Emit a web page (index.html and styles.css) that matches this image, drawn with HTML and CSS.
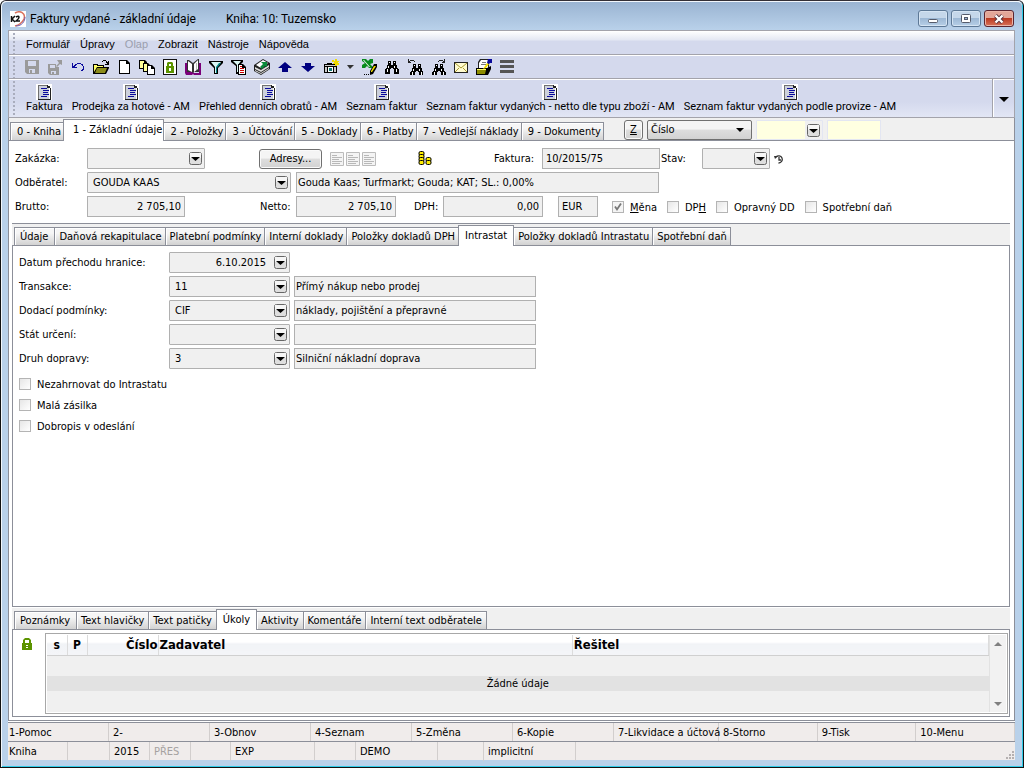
FILE: index.html
```
<!DOCTYPE html>
<html lang="cs">
<head>
<meta charset="utf-8">
<title>Faktury vydané - základní údaje</title>
<link rel="stylesheet" href="styles.css">
</head>
<body>
<svg class="defs" aria-hidden="true">
  <symbol id="drop" viewBox="0 0 15 15">
    <rect x="1.500" y="1.500" width="12" height="12" rx="2" fill="#dedede" stroke="#666"/>
    <rect x="2" y="2" width="11" height="5" fill="#f6f6f6"/>
    <path d="M3 6h9L7.500 10z" fill="#000"/>
  </symbol>
  <symbol id="report" viewBox="0 0 16 16">
    <path fill="#fff" d="M0 0h16v16H0z"/>
    <path fill="#cdd1dc" d="M3 2h10v13H3z"/>
    <path fill="#707070" d="M2 1h9v1H3v13H2z"/>
    <path fill="#222" d="M11 1h1v1h2v2h1v12H2v-1h12V4h-3z"/>
    <path fill="#0a0a9c" d="M5 4h6v1H5zM7 6h6v1H7zM7 8h5v1H7zM7 10h6v1H7zM5 12h6v1H5z"/>
  </symbol>
  <symbol id="page" viewBox="0 0 14 14">
    <path fill="#f4f4f4" stroke="#bcbcbc" d="M.5.5h13v13H.5z"/>
    <path fill="#b8b8b8" d="M2 3h5v1H2zM2 5h10v1H2zM2 7h7v1H2zM2 9h10v1H2zM2 11h8v1H2z"/>
  </symbol>
  <symbol id="bino" viewBox="0 0 16 16">
    <path fill="#000" d="M4 2h3v4h2V2h3v4h1v3h1v1h1v5h-5v-5H9V9H7v1H6v5H1v-5h1V9h1V6h1z"/>
    <path fill="#fff" d="M5 3h1v1H5zM10 3h1v1h-1zM4 7h1v2H4zM3 10h1v3H3zM10 7h1v2h-1zM12 10h1v3h-1z"/>
  </symbol>
</svg>

<div class="window">
  <header class="titlebar">
    <svg class="logo" viewBox="0 0 16 16"><path fill="#fff" d="M0 0h16v16H0z"/><path d="M5 2C10-1 16 2 14 8 12 12 9 14 5 15" fill="none" stroke="#d9705c" stroke-width="1.500"/><path d="M6 15c6 0 9-5 9-9" fill="none" stroke="#6a5cae"/><path d="M1.500 5v6M5 5 2 8l3 3M6 6c4-2 4 1 0 4h4" fill="none" stroke="#111" stroke-width="1.500"/></svg>
    <h1 class="title">Faktury vydané - základní údaje</h1>
    <span class="subtitle">Kniha: 10: Tuzemsko</span>
    <div class="winbtns">
      <button class="winbtn" aria-label="Minimalizovat"><svg viewBox="0 0 14 12"><rect x="2.500" y="6.500" width="9" height="3" rx="1" fill="#fff" stroke="#555b6b"/></svg></button>
      <button class="winbtn" aria-label="Maximalizovat"><svg viewBox="0 0 14 12"><rect x="2.500" y="1.500" width="9" height="8" rx="1" fill="#fff" stroke="#555b6b"/><rect x="5.500" y="4.500" width="3" height="2" fill="#9bb5d6" stroke="#555b6b"/></svg></button>
      <button class="winbtn close" aria-label="Zavřít"><svg viewBox="0 0 14 12"><path d="m3.500 2.500 7 7m0-7-7 7" stroke="#54303a" stroke-width="4"/><path d="m3.500 2.500 7 7m0-7-7 7" stroke="#fff" stroke-width="2.400"/></svg></button>
    </div>
  </header>

  <main class="client">
    <nav class="menu bar">
      <button>Formulář</button><button>Úpravy</button><button disabled>Olap</button><button>Zobrazit</button><button>Nástroje</button><button>Nápověda</button>
    </nav>

    <div class="tools bar" role="toolbar" aria-label="Nástroje">
      <button aria-label="Uložit"><svg viewBox="0 0 16 16"><path fill="#9a9a9a" d="M1 1h14v14H3l-2-2z"/><path fill="#d4d9ed" d="M4 2h8v5H4zM5 10h6v4H5z"/><path fill="#9a9a9a" d="M6 11h2v3H6z"/></svg></button>
      <button aria-label="Uložit a zavřít"><svg viewBox="0 0 16 16"><path fill="#9a9a9a" d="M1 5h8v3h3v8H3l-2-2z"/><path fill="#d4d9ed" d="M3 6h5v3H3zM4 12h5v3H4z"/><path fill="#9a9a9a" d="M5 13h2v2H5zM10 1h5v5l-2-1-3 3-1-1 3-3z"/></svg></button>
      <button aria-label="Zpět"><svg viewBox="0 0 16 16"><path fill="#0a0a9c" d="M2 4h1v3h1V6h1V5h2V4h4v1h2v2h1v4h-1v1h-2v-1h1v-1h1V7h-1V6h-1V5H7v1H6v1H5v1h2v1H2z"/></svg></button>
      <button aria-label="Otevřít"><svg viewBox="0 0 16 16"><path fill="#000" d="M9 2h1V1h3v1h1v1h1V2h1v4h-4V5h2V4h-1V2h-3v1H9zM0 5h5v1h6v2h5v1l-3 6H0z"/><path fill="#ffff66" d="M1 6h3v1h6v1H4l-3 5z"/><path fill="#8c8c1a" d="M4 9h10l-2 5H2z"/></svg></button>
      <button aria-label="Nový"><svg viewBox="0 0 16 16"><path fill="#000" d="M3 1h8l3 3v11H3z"/><path fill="#fff" d="M4 2h6v3h3v9H4z"/></svg></button>
      <button aria-label="Kopírovat"><svg viewBox="0 0 16 16"><path fill="#000" d="M0 1h6l2 2v7H0z"/><path fill="#ffff99" d="M1 2h4v2h2v5H1z"/><path fill="#000" d="M4 4h5l2 2v7H4z"/><path fill="#ffff99" d="M5 5h3v2h2v5H5z"/><path fill="#000" d="M8 6h5l3 3v7H8z"/><path fill="#fff" d="M9 7h3v3h3v5H9z"/></svg></button>
      <button aria-label="Zámek"><svg viewBox="0 0 16 16"><path fill="#111" d="M1 0h14v16H1z"/><path fill="#fff" d="M2 1h12v14H2z"/><path fill="#5c9400" d="M5 7V4l1-1h4l1 1v3h1v7H4V7zm2 0h2V5H7z"/><path fill="#fff" d="M7 9h2v3H7z"/></svg></button>
      <button aria-label="Kniha"><svg viewBox="0 0 16 16"><path fill="#7a007a" d="M0 4h2v9h6l1 1h5V4h2v12H9l-1-1-1 1H1l-1-2z"/><path fill="#333" d="M2 1h2l4 3 5-4h1v13H9l-1 1-1-1H2z"/><path fill="#fff" d="M3 2l4 3v8l-4-2zM9 5l4-4v9l-4 3z"/><path fill="#bbb" d="M11 4h1v7h-1z"/></svg></button>
      <button aria-label="Filtr"><svg viewBox="0 0 16 16"><path fill="#000" d="M1 2h14v2L10 9v6H6V9L1 4z"/><path fill="#d9f6f4" d="M3 3h10L9 8v6H7V8z"/><path fill="#008080" d="M11 4h2L9 9v5H8V8z"/></svg></button>
      <button aria-label="Filtr dokladu"><svg viewBox="0 0 16 16"><path fill="#000" d="M0 1h12v2L8 7v8H5V7L0 3z"/><path fill="#d9f6f4" d="M2 2h8L7 6v7H6V6z"/><path fill="#000" d="M7 5h5l3 3v8H7z"/><path fill="#fff" d="M8 6h3v3h3v6H8z"/><path fill="#c00" d="M9 7h2v1H9zM9 9h4v1H9zM9 11h4v1H9zM9 13h4v1H9z"/></svg></button>
      <button aria-label="Tisk"><svg viewBox="0 0 16 16"><path fill="#222" d="M9 0l7 4v6l-9 6-7-4V6z"/><path fill="#fff" d="M9 1l5 3-7 5-5-3z"/><path fill="#ddd" d="M1 8l6 3 8-5v2l-8 5-6-3zM1 11l6 3 8-5v1l-8 5-6-3z"/><path fill="#0a8a3a" d="M7 3h6v5l-2-1-3 3-2-2 3-3z"/></svg></button>
      <button aria-label="Nahoru"><svg viewBox="0 0 16 16"><path fill="#000080" d="M8 3l7 6h-4v4H5V9H1z"/></svg></button>
      <button aria-label="Dolů"><svg viewBox="0 0 16 16"><path fill="#000080" d="M8 13l7-6h-4V4H5v3H1z"/></svg></button>
      <button aria-label="Snímek"><svg viewBox="0 0 16 16"><path fill="#000" d="M1 5h3V4h5v1h5v9H1z"/><path fill="#ccc" d="M2 6h11v1H2zM2 8h2v5H2zM11 8h2v5h-2z"/><path fill="#fff" d="M5 8h5v5H5z"/><path fill="#177" d="M6 9h3v3H6z"/><path fill="#f0dc00" d="M9 1h2v1h1V0h2v2h2v1h-1v1h1v2h-2v1h-2V5h-2V4h1V3H9z"/></svg></button>
      <button class="narrow" aria-label="Další možnosti snímku"><svg viewBox="0 0 8 16"><path fill="#333" d="M1 6h7L4 10z"/></svg></button>
      <button aria-label="Excel"><svg viewBox="0 0 16 16"><path fill="#078a1c" d="M1 0h4l2 2 2-2h3v4L9 5l3 3v1H8L6 7 4 9H1V6l3-2-3-2z"/><path fill="#fff" d="M2 1h1l6 7H8z"/><path fill="#000" d="M13 5h3v3l-4 7-3 1v-4z"/><path fill="#f4e000" d="M13 7h2l-4 6h-1v-1z"/><path fill="#000" d="M3 15h1v1H3zM5 15h1v1H5zM7 15h1v1H7z"/></svg></button>
      <button aria-label="Hledat"><svg viewBox="0 0 16 16"><use href="#bino"/></svg></button>
      <button aria-label="Hledat předchozí"><svg viewBox="0 0 16 16"><path fill="#222" d="M1 0h1v2h1V1h4v1h1v1H7V2H3v1h1v1H1z"/><svg x="2" y="3" width="13" height="13"><use href="#bino"/></svg></svg></button>
      <button aria-label="Hledat další"><svg viewBox="0 0 16 16"><path fill="#222" d="M15 0h-1v2h-1V1H9v1H8v1h1V2h4v1h-1v1h3z"/><svg x="1" y="3" width="13" height="13"><use href="#bino"/></svg></svg></button>
      <button aria-label="Pošta"><svg viewBox="0 0 16 16"><path fill="#222" d="M1 3h14v11H1z"/><path fill="#fffbd0" d="M2 4h12v9H2z"/><path d="M2 4l6 5 6-5M2 13l4-4m8 4-4-4" fill="none" stroke="#a89a30"/></svg></button>
      <button aria-label="Úkol"><svg viewBox="0 0 16 16"><path fill="#222" d="M4 0h9v11H2V3z"/><path fill="#fff" d="M5 1h7v8H3V4z"/><path fill="#777" d="M6 3h4v1H6zM5 5h5v1H5z"/><path fill="#000" d="M0 9h11l4-2v3l-3 6H0z"/><path fill="#8c8c00" d="M1 11h9l-1 4H1z"/><path fill="#ffff66" d="M1 10h9v1H1z"/><path fill="#f4e000" d="M11 4l2 1-3 4-3 1z"/><path fill="#0a0a9c" d="M12 0h4v4h-2l-1 1-2-1z"/></svg></button>
      <button aria-label="Nabídka"><svg viewBox="0 0 16 16"><path fill="#555" d="M1 1h14v3H1zM1 6h14v3H1zM1 11h14v3H1z"/></svg></button>
    </div>

    <div class="reports bar">
      <button><svg><use href="#report"/></svg>Faktura</button>
      <button><svg><use href="#report"/></svg>Prodejka za hotové - AM</button>
      <button><svg><use href="#report"/></svg>Přehled denních obratů - AM</button>
      <button><svg><use href="#report"/></svg>Seznam faktur</button>
      <button><svg><use href="#report"/></svg>Seznam faktur vydaných - netto dle typu zboží - AM</button>
      <button><svg><use href="#report"/></svg>Seznam faktur vydaných podle provize - AM</button>
      <button class="more" aria-label="Další sestavy"><svg viewBox="0 0 10 6"><path d="M0 0h10L5 5z"/></svg></button>
    </div>

    <div class="tabs maintabs">
      <div class="tablist" role="tablist">
        <button role="tab">0 - Kniha</button><button role="tab" aria-selected="true">1 - Základní údaje</button><button role="tab">2 - Položky</button><button role="tab">3 - Účtování</button><button role="tab">5 - Doklady</button><button role="tab">6 - Platby</button><button role="tab">7 - Vedlejší náklady</button><button role="tab">9 - Dokumenty</button>
      </div>
      <div class="search">
        <button class="push zbtn"><u>Z</u></button>
        <div class="pick">
          <select aria-label="Hledat podle"><option>Číslo</option></select>
          <svg viewBox="0 0 8 4"><path d="M0 0h8L4 4z"/></svg>
        </div>
        <div class="combo yellow"><input aria-label="Hledaná hodnota"><svg><use href="#drop"/></svg></div>
        <input class="yellow until" aria-label="Do hodnoty">
      </div>
    </div>

    <section class="panel">
      <form class="head">
        <div class="row">
          <label class="lead" for="zak">Zakázka:</label>
          <div class="combo w118"><select id="zak"><option></option></select><svg><use href="#drop"/></svg></div>
          <button type="button" class="push addr">Adresy...</button>
          <span class="pages"><svg><use href="#page"/></svg><svg><use href="#page"/></svg><svg><use href="#page"/></svg></span>
          <svg class="coins" viewBox="0 0 14 15"><g fill="#ffee00" stroke="#000"><rect x="1" y=".5" width="5" height="4" rx="1.500"/><rect x="1" y="3.500" width="5" height="4" rx="1.500"/><rect x="1" y="6.500" width="5" height="4" rx="1.500"/><rect x="1" y="9.500" width="5" height="4" rx="1.500"/><rect x="8" y="6.500" width="5" height="4" rx="1.500"/><rect x="8" y="9.500" width="5" height="4" rx="1.500"/></g></svg>
          <label class="lfak" for="fak">Faktura:</label>
          <input id="fak" class="w118" value="10/2015/75" readonly>
          <label class="lstav" for="stav">Stav:</label>
          <div class="combo w68"><select id="stav"><option></option></select><svg><use href="#drop"/></svg></div>
          <svg class="clock" viewBox="0 0 10 10"><path d="M2 3a3.600 3.600 0 1 1 2.500 6M5 3v3h2" fill="none" stroke="#333" stroke-width="1.300"/><path d="M0 2h4L1 5z" fill="#333"/></svg>
        </div>
        <div class="row">
          <label class="lead" for="odb">Odběratel:</label>
          <div class="combo w204"><select id="odb"><option>GOUDA KAAS</option></select><svg><use href="#drop"/></svg></div>
          <input class="info w363" aria-label="Adresa odběratele" value="Gouda Kaas; Turfmarkt; Gouda; KAT; SL.: 0,00%" readonly>
        </div>
        <div class="row">
          <label class="lead" for="bru">Brutto:</label>
          <input id="bru" class="num w98" value="2 705,10" readonly>
          <label class="lnet" for="net">Netto:</label>
          <input id="net" class="num w100" value="2 705,10" readonly>
          <label class="ldph" for="dph">DPH:</label>
          <input id="dph" class="num w100" value="0,00" readonly>
          <input class="cur" aria-label="Měna dokladu" value="EUR" readonly>
          <div class="checks">
            <label><input type="checkbox" checked><span><u>M</u>ěna</span></label>
            <label><input type="checkbox"><span>DP<u>H</u></span></label>
            <label><input type="checkbox"><span>Opravný DD</span></label>
            <label><input type="checkbox"><span>Spotřební daň</span></label>
          </div>
        </div>
      </form>

      <div class="tabs subtabs">
        <div class="tablist" role="tablist">
          <button role="tab">Údaje</button><button role="tab">Daňová rekapitulace</button><button role="tab">Platební podmínky</button><button role="tab">Interní doklady</button><button role="tab">Položky dokladů DPH</button><button role="tab" aria-selected="true">Intrastat</button><button role="tab">Položky dokladů Intrastatu</button><button role="tab">Spotřební daň</button>
        </div>
      </div>
      <form class="intra">
        <div class="fields">
          <label for="dat">Datum přechodu hranice:</label>
          <div class="combo"><input id="dat" class="num" value="6.10.2015"><svg><use href="#drop"/></svg></div>
          <span></span>
          <label for="tra">Transakce:</label>
          <div class="combo"><select id="tra"><option>11</option></select><svg><use href="#drop"/></svg></div>
          <input class="info" aria-label="Popis transakce" value="Přímý nákup nebo prodej" readonly>
          <label for="dod">Dodací podmínky:</label>
          <div class="combo"><select id="dod"><option>CIF</option></select><svg><use href="#drop"/></svg></div>
          <input class="info" aria-label="Popis dodacích podmínek" value="náklady, pojištění a přepravné" readonly>
          <label for="sta">Stát určení:</label>
          <div class="combo"><select id="sta"><option></option></select><svg><use href="#drop"/></svg></div>
          <input class="info" aria-label="Název státu" readonly>
          <label for="dru">Druh dopravy:</label>
          <div class="combo"><select id="dru"><option>3</option></select><svg><use href="#drop"/></svg></div>
          <input class="info" aria-label="Popis dopravy" value="Silniční nákladní doprava" readonly>
        </div>
        <div class="flags">
          <label><input type="checkbox"><span>Nezahrnovat do Intrastatu</span></label>
          <label><input type="checkbox"><span>Malá zásilka</span></label>
          <label><input type="checkbox"><span>Dobropis v odeslání</span></label>
        </div>
      </form>

      <div class="tabs subtabs notetabs">
        <div class="tablist" role="tablist">
          <button role="tab">Poznámky</button><button role="tab">Text hlavičky</button><button role="tab">Text patičky</button><button role="tab" aria-selected="true">Úkoly</button><button role="tab">Aktivity</button><button role="tab">Komentáře</button><button role="tab">Interní text odběratele</button>
        </div>
      </div>
      <div class="tasks">
        <svg class="lock" viewBox="0 0 12 14"><path fill="#5c9400" d="M2 6V3l2-2h4l2 2v3h1v7H1V6zm2 0h4V3H4z"/><path fill="#fff" d="M5 8h2v1H5zM5 10h2v1H5z"/></svg>
        <div class="grid">
          <table>
            <colgroup><col class="c20"><col class="c20"><col class="c70"><col class="c44"><col></colgroup>
            <thead><tr><th class="mid">s</th><th class="mid">P</th><th class="end">Číslo</th><th>Zadavatel</th><th>Řešitel</th></tr></thead>
            <tbody>
              <tr class="blank"><td colspan="5"></td></tr>
              <tr class="none"><td colspan="5">Žádné údaje</td></tr>
            </tbody>
          </table>
          <div class="scroll">
            <button aria-label="Nahoru"><svg viewBox="0 0 8 4"><path d="M4 0l4 4H0z"/></svg></button>
            <button aria-label="Dolů"><svg viewBox="0 0 8 4"><path d="M0 0h8L4 4z"/></svg></button>
          </div>
        </div>
      </div>
    </section>

    <footer class="footer">
      <div class="keys">
        <button>1-Pomoc</button><button>2-</button><button>3-Obnov</button><button>4-Seznam</button><button>5-Změna</button><button>6-Kopie</button><button>7-Likvidace a účtová</button><button>8-Storno</button><button>9-Tisk</button><button>10-Menu</button>
      </div>
      <div class="status">
        <span>Kniha</span><span></span><span>2015</span><span class="off">PŘES</span><span></span><span>EXP</span><span></span><span>DEMO</span><span></span><span>implicitní</span>
        <span class="grip"><svg viewBox="0 0 9 9"><path fill="#b5b0b0" d="M7 0h2v2H7zM7 3h2v2H7zM7 6h2v2H7zM4 3h2v2H4zM4 6h2v2H4zM1 6h2v2H1z"/></svg></span>
      </div>
    </footer>
  </main>
</div>
</body>
</html>
```
FILE: styles.css
```
* { box-sizing: border-box; }
body {
  margin: 0;
  font: 11px/14px "DejaVu Sans Condensed", "DejaVu Sans", sans-serif;
  color: #000;
}
button, input, select { font: inherit; color: inherit; margin: 0; padding: 0; border: 0; background: none; border-radius: 0; }
svg { display: block; flex: none; }
.defs { position: absolute; width: 0; height: 0; }

.window {
  display: flex;
  flex-direction: column;
  min-height: 100vh;
  padding: 0 8px 7px 7px;
  border: 1px solid #111;
  border-top-color: #332f36;
  border-radius: 6px 6px 0 0;
  background: #b9d1ea;
  box-shadow: inset 1px 1px #f2f7fc, inset -1px -1px #2ecbe8;
}
.titlebar {
  display: flex;
  align-items: center;
  height: 29px;
  margin: 0 -7px 0 -6px;
  padding: 5px 8px 0 8px;
  border-top: 1px solid #f2f7fc;
  border-radius: 5px 5px 0 0;
  background: linear-gradient(#9ab4d2, #b9d1ea);
  font: 12px/16px Roboto, "Open Sans", sans-serif;
}
.logo { width: 16px; height: 16px; margin-right: 4px; }
.title { margin: 0; font: inherit; }
.subtitle { margin-left: 30px; }
.winbtns { display: flex; gap: 3px; margin-left: auto; align-self: flex-start; padding-top: 3px; }
.winbtn {
  display: flex; align-items: center; justify-content: center;
  width: 30px; height: 17px;
  border: 1px solid #5d7896; border-radius: 3px;
  background: linear-gradient(#c5d7ea 45%, #9db8d5 50%, #b7cfe7);
  box-shadow: inset 0 0 0 1px #d5e4f3;
}
.winbtn svg { width: 14px; height: 12px; }
.winbtn.close { border-color: #5b2530; background: linear-gradient(#e3a698 45%, #bb3a22 50%, #d8735a); box-shadow: inset 0 0 0 1px #eab5a8; }

.client {
  flex: 1;
  display: flex;
  flex-direction: column;
  background: #fff;
}
.bar {
  display: flex;
  align-items: center;
  padding-left: 17px;
  border: 1px solid #a3a3ab;
  border-width: 0 1px 1px;
  background: radial-gradient(circle, #a9adbd 1px, transparent 1px) 3px 1px / 4px 4px repeat-y, #d4d9ed;
  box-shadow: inset 0 1px #fff;
  font: 11px/14px "Liberation Sans", sans-serif;
}
.menu {
  gap: 10px;
  height: 25px;
  border-top-width: 1px;
  padding-top: 3px;
  background: radial-gradient(circle, #a9adbd 1px, transparent 1px) 3px 1px / 4px 4px repeat-y, linear-gradient(#fff, #e4e8f3 9px, #d4d9ed 10px);
}
.menu button:disabled { color: #9b9fae; }
.tools { gap: 7px; height: 24px; padding-left: 15px; }
.tools button { width: 16px; height: 16px; }
.tools svg { width: 16px; height: 16px; }
.tools .narrow, .tools .narrow svg { width: 8px; }
.reports {
  gap: 9px;
  height: 39px;
  align-items: stretch;
  background: radial-gradient(circle, #a9adbd 1px, transparent 1px) 3px 1px / 4px 4px repeat-y, linear-gradient(#d4d9ed 60%, #e2e6f5);
  font-family: Roboto, "Liberation Sans", sans-serif;
}
.reports button { display: flex; flex-direction: column; align-items: center; padding-top: 5px; white-space: nowrap; }
.reports button > svg { width: 16px; height: 16px; }
.reports .more { width: 22px; margin-left: auto; padding: 18px 0 0; border-left: 1px solid #a3a3ab; box-shadow: inset 1px 0 #fff; }
.reports .more svg { width: 10px; height: 6px; }

.tabs { display: flex; align-items: flex-end; background: #f0f0f0; }
.tablist { display: flex; align-items: flex-end; }
.tabs [role=tab] {
  height: 18px;
  padding: 1px 3px 0 4px;
  border: 1px solid #8c8f99;
  border-width: 1px 1px 0;
  margin-left: -1px;
  background: linear-gradient(#f6f6f6 30%, #d2d2d2);
  box-shadow: inset 1px 1px #fff;
  white-space: nowrap;
}
.tabs [role=tab][aria-selected=true] { position: relative; height: 21px; margin-bottom: -1px; padding: 0 6px 1px; background: #fff; }
.tabs [role=tab]:first-child { margin-left: 0; padding-left: 5px; padding-right: 6px; }
.maintabs { height: 23px; padding-left: 1px; border-left: 1px solid #8c8f99; border-right: 1px solid #8c8f99; box-shadow: inset 0 -1px #8c8f99; }
.maintabs [role=tab] { padding: 1px 2px 0 6px; }
.maintabs [role=tab]:first-child { padding: 1px 2px 0 6px; }
.maintabs [role=tab]:not([aria-selected]) { height: 19px; border-bottom: 1px solid #8c8f99; }
.maintabs [role=tab][aria-selected=true] { height: 22px; margin-bottom: 0; padding: 0 1px 1px 9px; }
.search { display: flex; align-items: center; gap: 4px; height: 22px; margin-left: 20px; }
.push {
  height: 20px;
  border: 1px solid #707070; border-radius: 3px;
  background: linear-gradient(#f4f4f4 45%, #dedede 50%, #d2d2d2);
  box-shadow: inset 0 0 0 1px #fafafa;
}
.zbtn { width: 19px; }
.pick { display: grid; grid-template-columns: 1fr 16px; align-items: center; width: 105px; height: 20px; }
.pick select { appearance: none; grid-area: 1 / 1 / 2 / 3; height: 20px; padding-left: 3px; border: 1px solid #707070; border-radius: 2px; background: linear-gradient(#f4f4f4 45%, #dedede 50%, #d2d2d2); }
.pick svg { grid-area: 1 / 2; width: 8px; height: 4px; pointer-events: none; }
.yellow.combo { width: 67px; height: 20px; background: linear-gradient(to right, #ffffe1 48px, #f0f0f0 48px); border-color: #e3e6f2; }
.yellow.until { width: 54px; height: 20px; background: #ffffe1; border: 1px solid #e3e6f2; }

.panel {
  flex: 1;
  display: flex;
  flex-direction: column;
  padding: 0 4px 3px 3px;
  border: 1px solid #8c8f99;
  border-top: 0;
}
.head { display: flex; flex-direction: column; gap: 3px; padding: 7px 0 6px 3px; border-bottom: 1px solid #8c8f99; }
.row { display: flex; align-items: center; height: 21px; }
.row > label { flex: none; }
input:not([type]) {
  min-width: 0; height: 21px;
  padding: 0 3px 1px 3px;
  border: 1px solid #b0b0b0;
  background: #f0f0f0;
}
.row > input.info, .fields .info { padding-left: 1px; }
.combo {
  display: grid;
  grid-template-columns: 1fr 16px;
  align-items: center;
  height: 21px;
  border: 1px solid #b0b0b0; border-radius: 1px;
  background: #f0f0f0;
}
.combo select, .combo input:not([type]) {
  appearance: none;
  grid-area: 1 / 1 / 2 / 3;
  min-width: 0; width: 100%; height: 19px;
  padding: 0 23px 0 5px;
  border: 0;
  background: none;
}
.combo svg { grid-area: 1 / 2; width: 15px; height: 15px; pointer-events: none; }
input.num { text-align: right; }
.lead { width: 72px; }
.w118 { width: 118px; }
.w68 { width: 68px; }
.w204 { width: 204px; }
.w363 { width: 363px; margin-left: 5px; }
.w98 { width: 98px; }
.w100 { width: 100px; }
.addr { width: 63px; margin-left: 54px; }
.pages { display: flex; gap: 2px; margin-left: 8px; }
.pages svg { width: 14px; height: 14px; }
.coins { width: 14px; height: 15px; margin-left: 42px; }
.lfak { width: 48px; margin-left: 62px; }
.lstav { width: 41px; margin-left: 1px; }
.clock { width: 10px; height: 10px; margin-left: 4px; }
.lnet { width: 36px; margin-left: 75px; }
.ldph { width: 29px; margin-left: 18px; }
.row .cur { width: 40px; margin-left: 15px; }
.checks { display: flex; gap: 10px; margin-left: 14px; white-space: nowrap; }
.checks label, .flags label { display: flex; align-items: center; gap: 6px; }
.checks span { padding-top: 3px; }
input[type=checkbox] {
  appearance: none;
  width: 12px; height: 12px;
  border: 1px solid #b4b4b4;
  background: linear-gradient(135deg, #e6e6e6, #fff);
}
input[type=checkbox]:checked { background: url("data:image/svg+xml,%3Csvg xmlns='http://www.w3.org/2000/svg' viewBox='0 0 10 10'%3E%3Cpath d='M2 4.500l2 3 4-6' fill='none' stroke='%23777' stroke-width='1.800'/%3E%3C/svg%3E") #f4f4f4; }

.subtabs { height: 21px; padding-left: 2px; background: #f0f0f0; }
.intra {
  flex: 1;
  padding: 6px 6px 12px;
  border: 1px solid #8c8f99;
}
.fields { display: grid; grid-template-columns: 150px 121px minmax(0, 242px); gap: 3px 0; align-items: center; }
.fields .info { margin-left: 4px; width: 100%; }
.flags { display: flex; flex-direction: column; gap: 7px; margin-top: 8px; }
.flags label { height: 14px; }
.flags span { padding-top: 1px; }

.notetabs { margin-top: 1px; }
.notetabs [role=tab]:not(:first-child):not([aria-selected]) { padding: 1px 4px 0; }
.tasks { display: flex; padding: 3px 1px 2px 8px; border: 1px solid #8c8f99; height: 88px; }
.lock { width: 12px; height: 14px; margin: 4px 12px 0 0; }
.grid { flex: 1; display: flex; padding: 1px; border: 1px solid #a8a8a8; }
.grid table { flex: 1; border-collapse: collapse; table-layout: fixed; background: #f0f0f0; }
.c20 { width: 20px; }
.c70 { width: 71px; }
.c44 { width: 44%; }
.grid th {
  height: 20px; padding: 0 1px 0 1px;
  border-right: 1px solid #dcdcdc; border-bottom: 1px solid #d0d0d0;
  background: linear-gradient(#fff 35%, #f1f3f6 45%, #f4f5f8);
  text-align: left;
  font-size: 13px; line-height: 14px;
}
.grid th.mid { text-align: center; font-size: 12px; }
.grid th.end { text-align: right; padding-right: 0; }
.grid td { padding: 0; }
.blank td { height: 21px; }
.none td { height: 15px; background: #e2e2e2; text-align: center; line-height: 15px; }
.grid tbody::after { content: ""; display: table-row; }
.scroll { display: flex; flex-direction: column; justify-content: space-between; width: 17px; background: #f2f2f2; border-left: 1px solid #e2e2e2; }
.scroll button { display: grid; place-items: center; height: 17px; }
.scroll svg { width: 8px; height: 4px; fill: #808080; }

.footer { padding-top: 1px; background: #fff; }
.keys { display: grid; grid-template-columns: repeat(6, minmax(0, 101px)) minmax(0, 105px) repeat(3, minmax(0, 1fr)); height: 20px; border-top: 1px solid #8c8f99; border-bottom: 1px solid #8c8f99; background: #f0eceb; }
.keys button { text-align: left; padding: 2px 0 0 4px; border-right: 1px solid #d2cecd; white-space: nowrap; }
.keys button:first-child, .status span:first-child { padding-left: 1px; }
.status { display: grid; grid-template-columns: 60px 42px 40px 41px 40px 84px 41px 82px 46px 92px 1fr; height: 18px; background: #f0eceb; line-height: 19px; }
.status span { padding-left: 4px; border-right: 1px solid #d2cecd; }
.status .off { color: #a5a1a0; }
.status .grip { display: flex; align-items: flex-end; justify-content: flex-end; border: 0; padding: 0 1px 1px 0; }
.grip svg { width: 9px; height: 9px; }
```
